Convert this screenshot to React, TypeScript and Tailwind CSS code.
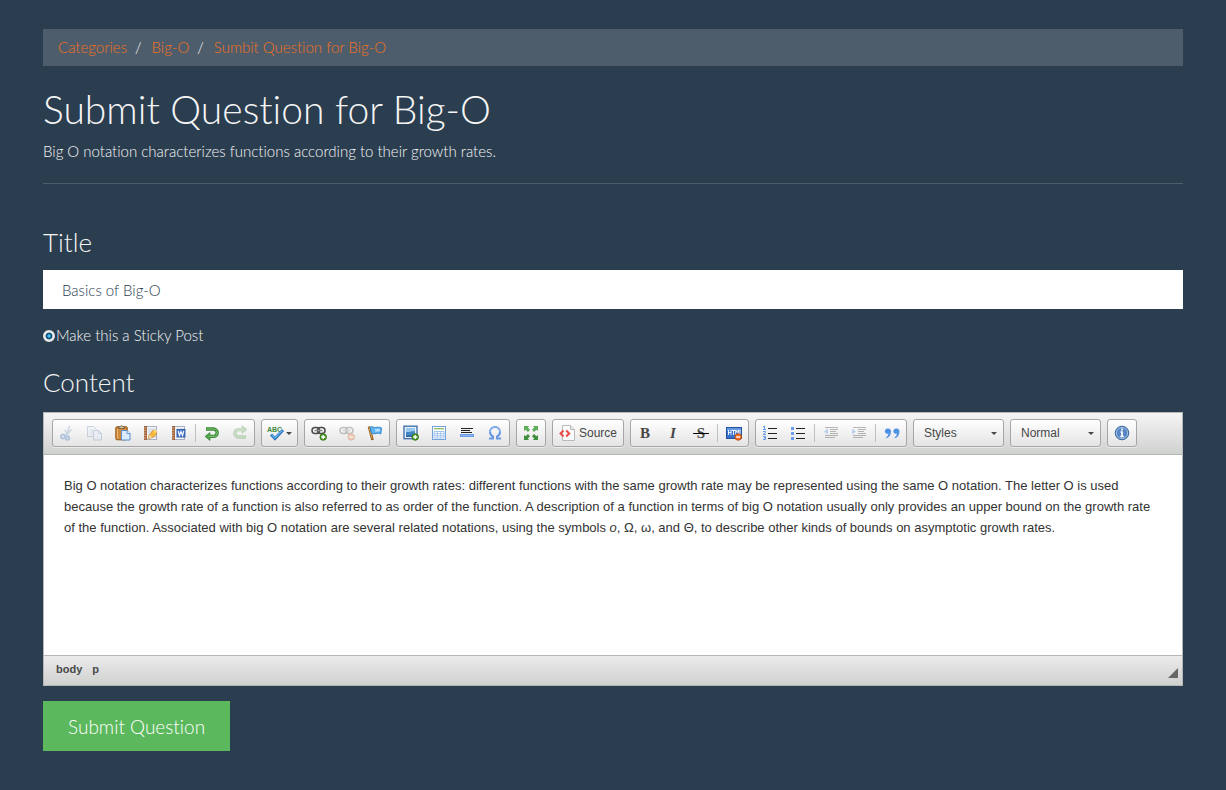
import { useState } from "react";
import type { ReactNode } from "react";

function Icon({ children, faded = false }: { children: ReactNode; faded?: boolean }) {
  return (
    <svg viewBox="0 0 16 16" aria-hidden="true" className={faded ? "size-4 opacity-30" : "size-4"} fill="none">
      {children}
    </svg>
  );
}

function PlusBadge() {
  return (
    <>
      <circle cx="12.2" cy="12" r="3.3" fill="#4c9a2a" stroke="#2f6e15" strokeWidth="0.8" />
      <path d="M10.2 12h4M12.2 10v4" stroke="#fff" strokeWidth="1.3" />
    </>
  );
}

function MinusBadge() {
  return (
    <>
      <circle cx="12.2" cy="12" r="3.3" fill="#ee6c22" stroke="#bf4a0c" strokeWidth="0.8" />
      <path d="M10.2 12h4" stroke="#fff" strokeWidth="1.4" />
    </>
  );
}

function ChainLinks() {
  return (
    <>
      <rect x="1" y="2.5" width="7.5" height="6" rx="3" stroke="#4a4a4a" strokeWidth="1.5" />
      <rect x="6.5" y="2.5" width="7.5" height="6" rx="3" stroke="#4a4a4a" strokeWidth="1.5" />
      <path d="M3.500 5.500h8" stroke="#8a8a8a" strokeWidth="1.5" />
    </>
  );
}

function Notebook() {
  return (
    <>
      <rect x="3.5" y="1.5" width="10" height="13" fill="#f2f4f8" stroke="#a9afc0" />
      <rect x="1" y="1" width="3" height="14" fill="#a5683f" />
      <path d="M1 3h2M1 5.500h2M1 8h2M1 10.500h2M1 13h2" stroke="#dcb496" strokeWidth="0.8" />
      <path d="M5 4h8M5 6h8M5 8h8M5 10h8M5 12h8" stroke="#bcc6da" strokeWidth="0.8" />
    </>
  );
}

const icons = {
  cut: (
    <Icon faded>
      <path d="M10.500 1 8 9.500M12.500 4.500 6.500 11M6 5l3 6" stroke="#7595c0" strokeWidth="1.600" />
      <circle cx="4" cy="11.500" r="2" stroke="#2f6cb8" strokeWidth="2" />
      <circle cx="8.500" cy="13" r="1.800" stroke="#2f6cb8" strokeWidth="2" />
    </Icon>
  ),
  copy: (
    <Icon faded>
      <path d="M.5 1.500h6l3 3v7h-9z" fill="#e8f0fa" stroke="#6583ad" />
      <path d="M2.500 5h4M2.500 7h4M2.500 9h4" stroke="#9db4d3" />
      <path d="M6.500 5.500h5l3 3v6.500h-8z" fill="#dce9f8" stroke="#6583ad" />
      <path d="M11.500 5.500v3h3" stroke="#6583ad" />
    </Icon>
  ),
  paste: (
    <Icon>
      <rect x=".8" y="1.800" width="11.500" height="13" rx="1.200" fill="#d08c3c" stroke="#94581c" />
      <path d="M2.500 4v9.500" stroke="#efb76a" />
      <path d="M3.500 3.500V2H5C5.500.4 7.500.4 8 2h1.500v1.500z" fill="#d9c9a8" stroke="#6b5433" strokeWidth="0.800" />
      <path d="M6.500 5.500h5.500l3 3v6.500H6.500z" fill="#dcecff" stroke="#5d8fd0" />
      <path d="M12 5.500v3h3" fill="#fff" stroke="#5d8fd0" />
    </Icon>
  ),
  pasteText: (
    <Icon>
      <Notebook />
      <path d="m5 14 1.500-4.500c2-.500 2-4 4.500-4.500l2.500 2.500c.500 2.500-2 3-3 4.500z" fill="#f6b93b" stroke="#c77b18" strokeWidth="0.700" />
      <path d="m10 6 3-1.500 1 2-2 2z" fill="#ffd977" />
      <path d="m5 14 1.500-4c1 .5 2 1.500 2.500 2.500z" fill="#f8d9a2" />
    </Icon>
  ),
  pasteWord: (
    <Icon>
      <Notebook />
      <rect x="6" y="4.500" width="8" height="7.500" fill="#4778cb" stroke="#2853a0" strokeWidth="0.800" />
      <path d="m7.200 6 1.300 4.500L10 6.500l1.500 4L12.800 6" stroke="#fff" strokeWidth="1.100" />
    </Icon>
  ),
  undo: (
    <Icon>
      <path d="M2 4h7.500a3.700 3.700 0 0 1 0 7.400H5" stroke="#3a8a35" strokeWidth="3.400" />
      <path d="M6 7.500v8L1 11.400z" fill="#4d9f46" stroke="#2f7a2c" strokeWidth="0.600" />
      <path d="M2.500 4h7a3.700 3.700 0 0 1 0 7.400H4.500" stroke="#7cc170" strokeWidth="1.200" />
    </Icon>
  ),
  redo: (
    <Icon faded>
      <path d="M14 12H6.500a3.700 3.700 0 0 1 0-7.400H11" stroke="#3a8a35" strokeWidth="3.400" />
      <path d="M10 .5v8l5-4z" fill="#4d9f46" stroke="#2f7a2c" strokeWidth="0.600" />
      <path d="M13.500 12h-7a3.700 3.700 0 0 1 0-7.400h5" stroke="#7cc170" strokeWidth="1.200" />
    </Icon>
  ),
  link: (
    <Icon>
      <ChainLinks />
      <PlusBadge />
    </Icon>
  ),
  unlink: (
    <Icon faded>
      <ChainLinks />
      <MinusBadge />
    </Icon>
  ),
  anchor: (
    <Icon>
      <path d="m2 1.500 3.500 13.500" stroke="#8a5518" strokeWidth="2.600" />
      <path d="m2 2 3.200 12" stroke="#e0a246" />
      <path d="M3 2.500c2-2 4 .500 6 0 2-.500 3.500-.500 5.500.500L13.800 9c-2-1-3-1-4.500-.500-1.500.500-3 0-4.800 0z" fill="#5db4ef" stroke="#2d80c8" strokeWidth="0.900" />
      <path d="M8 3.800c1.500.500 3-.500 5 0l-.500 3c-1.500-.500-3 0-4 0z" fill="#b4e2fd" />
    </Icon>
  ),
  image: (
    <Icon>
      <rect x="1" y="1.200" width="13" height="12.500" fill="#e8f1fb" stroke="#3a68a8" strokeWidth="1.300" />
      <path d="M3 3h9v4.500H3z" fill="#99c8ee" />
      <path d="M3 7c3 .500 6-1 9-1v5.500H3z" fill="#4286c5" />
      <path d="M3 10.500h9v1.500H3z" fill="#2c609e" />
      <PlusBadge />
    </Icon>
  ),
  table: (
    <Icon>
      <rect x="1.500" y="1.500" width="13" height="13" fill="#fff" stroke="#73a3df" />
      <path d="M3 3.700h10" stroke="#91bf68" strokeWidth="1.400" />
      <path d="M3 6.500h10v6.500H3zM3 8.700h10M3 10.800h10M6.300 6.500V13M9.700 6.500V13" stroke="#a0c4ef" />
    </Icon>
  ),
  rule: (
    <Icon>
      <path d="M2 3.500h12M2 5.500h9M2 7.500h11" stroke="#222" />
      <rect x="1.500" y="9.500" width="13" height="2" fill="#8db8f5" stroke="#6c9ce8" />
    </Icon>
  ),
  omega: (
    <Icon>
      <path d="M2 13.500h4v-1.800C4 10.500 3 8.700 3 7a5 5 0 0 1 10 0c0 1.700-1 3.500-3 4.700v1.800h4" stroke="#6797e2" strokeWidth="2" />
      <path d="M3 7a5 5 0 0 1 10 0" stroke="#93bcf2" />
    </Icon>
  ),
  maximize: (
    <Icon>
      <g fill="#5fae5c">
        <path d="M1 1h5L4.800 2.500 7 4.800 5 7 2.500 4.700 1 6z" />
        <path d="M15 1h-5l1.200 1.500L9 4.800 11 7l2.500-2.300L15 6z" />
      </g>
      <g fill="#3f8f3e">
        <path d="M1 15h5l-1.200-1.500L7 11.200 5 9l-2.500 2.300L1 10z" />
        <path d="M15 15h-5l1.200-1.500L9 11.200 11 9l2.500 2.300L15 10z" />
      </g>
    </Icon>
  ),
  source: (
    <Icon>
      <path d="M3.500.5h8l4 4v11h-12z" fill="#fafafa" stroke="#b9b9b9" />
      <path d="M11.500.5v4h4" fill="#e9e9e9" stroke="#b9b9b9" />
      <path d="M4.500 5.500 1.500 8.500l3 3M7.200 5.500l3 3-3 3" stroke="#ed4b43" strokeWidth="2" />
    </Icon>
  ),
  html: (
    <Icon>
      <rect x=".5" y="2.500" width="15" height="11" fill="#386fcb" stroke="#264f9e" />
      <path d="M1 3h14v3H1z" fill="#6699e3" />
      <path d="M2.500 5v5M5 5v5M2.500 7.500H5M6 5.500h3M7.500 5.500V10M9.700 10V5l1.500 2.500L12.700 5v5M14 5v4.500" stroke="#fff" strokeWidth="0.900" />
      <MinusBadge />
    </Icon>
  ),
  numbered: (
    <Icon>
      <path d="M1 2 2.500 1V4M1 4.500h3M1 6.500h2.500v1L1 9.500h3M1 11.500h2.500v1.300H2h1.500V14.500H1" stroke="#689bea" />
      <path d="M6 3.500h9M6 8.500h9M6 13.500h9" stroke="#222" />
    </Icon>
  ),
  bulleted: (
    <Icon>
      <path d="M1 2h3v3H1zM1 7h3v3H1zM1 12h3v3H1z" fill="#6b9eee" />
      <path d="M6 3.500h9M6 8.500h9M6 13.500h9" stroke="#222" />
    </Icon>
  ),
  outdent: (
    <Icon faded>
      <path d="M2 2.500h13M7 4.500h8M7 6.500h6M7 8.500h8M2 10.500h13M2 12.500h10" stroke="#222" />
      <path d="M5 3.500v6L1 6.500z" fill="#3c82e0" />
    </Icon>
  ),
  indent: (
    <Icon faded>
      <path d="M2 2.500h13M7 4.500h8M7 6.500h6M7 8.500h8M2 10.500h13M2 12.500h10" stroke="#222" />
      <path d="M1 3.500v6l4-3z" fill="#3c82e0" />
    </Icon>
  ),
  quote: (
    <Icon>
      <path d="M4 3.500a2.700 2.700 0 1 0 .4 5.200C4.200 10.500 3.200 11.500 2 12.500v.800C5 12.500 7 10 7 6.500c0-1.800-1.200-3-3-3z" fill="#4f93e6" />
      <path d="M12.500 3.500a2.700 2.700 0 1 0 .4 5.200c-.2 1.800-1.200 2.800-2.400 3.800v.8c3-.800 5-3.300 5-6.800 0-1.800-1.200-3-3-3z" fill="#4f93e6" />
    </Icon>
  ),
  about: (
    <Icon>
      <circle cx="8" cy="8" r="6.800" fill="#5586c2" stroke="#41699c" />
      <circle cx="8" cy="8" r="5.600" stroke="#a5c5e7" strokeWidth="0.900" />
      <path d="M8 3.500v2M6.500 7H8v4.500M6.300 11.500h3.500" stroke="#fff" strokeWidth="1.700" />
    </Icon>
  ),
};

function Group({ children }: { children: ReactNode }) {
  return (
    <div className="flex h-7 items-stretch rounded-[3px] border border-[#a6a6a6] bg-linear-to-b from-white to-[#e4e4e4] shadow-[0_1px_0_rgba(255,255,255,0.5)]">
      {children}
    </div>
  );
}

function Tool({ label, children, disabled = false }: { label: string; children: ReactNode; disabled?: boolean }) {
  return (
    <button type="button" aria-label={label} title={label} disabled={disabled} className="flex w-7 items-center justify-center">
      {children}
    </button>
  );
}

function Separator() {
  return <span className="mx-0.5 h-[18px] w-px self-center bg-[#c0c0c0]" />;
}

function Arrow() {
  return (
    <svg viewBox="0 0 6 3" aria-hidden="true" className="h-[3px] w-1.5">
      <path d="M0 0h6L3 3z" fill="#474747" />
    </svg>
  );
}

function Combo({ label, options }: { label: string; options: string[] }) {
  return (
    <Group>
      <div className="relative flex items-center">
        <select aria-label={label} className="h-full w-[89px] appearance-none bg-transparent pl-2.5 text-xs text-[#474747] outline-none">
          {options.map((option) => (
            <option key={option}>{option}</option>
          ))}
        </select>
        <span className="pointer-events-none absolute right-1.5">
          <Arrow />
        </span>
      </div>
    </Group>
  );
}

function Toolbar() {
  return (
    <div role="toolbar" aria-label="Editor" className="flex flex-wrap gap-1.5 border-b border-[#b6b6b6] bg-linear-to-b from-[#f5f5f5] to-[#cfd1cf] px-2 pt-1.5 pb-[7px] text-[#474747]">
      <Group>
        <Tool label="Cut" disabled>{icons.cut}</Tool>
        <Tool label="Copy" disabled>{icons.copy}</Tool>
        <Tool label="Paste">{icons.paste}</Tool>
        <Tool label="Paste as plain text">{icons.pasteText}</Tool>
        <Tool label="Paste from Word">{icons.pasteWord}</Tool>
        <Separator />
        <Tool label="Undo">{icons.undo}</Tool>
        <Tool label="Redo" disabled>{icons.redo}</Tool>
      </Group>
      <Group>
        <button type="button" aria-label="Spell Check As You Type" className="flex w-[35px] items-center justify-center gap-px">
          <svg viewBox="0 0 18 16" aria-hidden="true" className="h-4 w-[18px]">
            <text x="0" y="7" fontSize="7" fontWeight="700" fill="#3c8a3c" fontFamily="Liberation Sans, sans-serif">ABC</text>
            <path d="m4 9.500 4 4 8-8.500" fill="none" stroke="#2f72b8" strokeWidth="3" />
            <path d="m4.500 9.500 3.500 3.500 7.500-8" fill="none" stroke="#5db1ef" strokeWidth="1.400" />
          </svg>
          <Arrow />
        </button>
      </Group>
      <Group>
        <Tool label="Link">{icons.link}</Tool>
        <Tool label="Unlink" disabled>{icons.unlink}</Tool>
        <Tool label="Anchor">{icons.anchor}</Tool>
      </Group>
      <Group>
        <Tool label="Image">{icons.image}</Tool>
        <Tool label="Table">{icons.table}</Tool>
        <Tool label="Insert Horizontal Line">{icons.rule}</Tool>
        <Tool label="Insert Special Character">{icons.omega}</Tool>
      </Group>
      <Group>
        <Tool label="Maximize">{icons.maximize}</Tool>
      </Group>
      <Group>
        <button type="button" className="flex items-center gap-1 px-1.5 text-xs">
          {icons.source}
          Source
        </button>
      </Group>
      <Group>
        <Tool label="Bold">
          <span className="font-['Liberation_Serif',serif] text-[15px] leading-4 font-bold">B</span>
        </Tool>
        <Tool label="Italic">
          <span className="font-['Liberation_Serif',serif] text-[15px] leading-4 font-bold italic">I</span>
        </Tool>
        <Tool label="Strikethrough">
          <span className="font-['Liberation_Serif',serif] text-[15px] leading-4 font-bold line-through decoration-black">
            &nbsp;S&nbsp;
          </span>
        </Tool>
        <Separator />
        <Tool label="Remove Format">{icons.html}</Tool>
      </Group>
      <Group>
        <Tool label="Numbered list">{icons.numbered}</Tool>
        <Tool label="Bulleted list">{icons.bulleted}</Tool>
        <Separator />
        <Tool label="Decrease Indent" disabled>{icons.outdent}</Tool>
        <Tool label="Increase Indent" disabled>{icons.indent}</Tool>
        <Separator />
        <Tool label="Block Quote">{icons.quote}</Tool>
      </Group>
      <Combo label="Formatting Styles" options={["Styles"]} />
      <Combo label="Paragraph Format" options={["Normal", "Heading 1", "Heading 2"]} />
      <Group>
        <Tool label="About">{icons.about}</Tool>
      </Group>
    </div>
  );
}

function Editor() {
  return (
    <div className="border border-[#b6b6b6] bg-white font-['Liberation_Sans',sans-serif] font-normal">
      <Toolbar />
      <div
        role="textbox"
        aria-multiline="true"
        aria-labelledby="content-heading"
        contentEditable
        suppressContentEditableWarning
        className="min-h-[200px] p-5 text-[13px] leading-[21px] text-[#333] outline-none"
      >
        <p>
          Big O notation characterizes functions according to their growth rates: different functions with the same
          growth rate may be represented using the same O notation. The letter O is used because the growth rate of a
          function is also referred to as order of the function. A description of a function in terms of big O notation
          usually only provides an upper bound on the growth rate of the function. Associated with big O notation are
          several related notations, using the symbols <i>o</i>, Ω, ω, and Θ, to describe other kinds of bounds on
          asymptotic growth rates.
        </p>
      </div>
      <div className="flex h-[30px] items-center justify-between border-t border-[#b6b6b6] bg-linear-to-b from-[#ebebeb] to-[#cfd1cf] pr-1 pl-3 text-[11px] font-bold text-[#484848]">
        <div className="flex gap-2.5 pb-0.5">
          <span>body</span>
          <span>p</span>
        </div>
        <svg viewBox="0 0 10 10" aria-hidden="true" className="mb-[7px] size-2.5 self-end">
          <path d="M10 0v10H0z" fill="#666" />
        </svg>
      </div>
    </div>
  );
}

export default function App() {
  const [title, setTitle] = useState("Basics of Big-O");
  return (
    <div className="min-h-screen bg-[#2b3e50] font-['Lato',sans-serif] text-[15px] leading-[21px] font-light text-[#f5f5f5] [font-variant-ligatures:none]">
      <main className="mx-auto max-w-[1170px] px-[15px] py-[29px]">
        <nav aria-label="Breadcrumb" className="bg-[#4e5d6c] px-[15px] py-2">
          <ol className="flex text-[#f0701c]">
            <li><a href="#categories">Categories</a></li>
            <li className="flex before:pr-2.5 before:pl-2 before:text-[#f5f5f5] before:content-['/']"><a href="#big-o">Big-O</a></li>
            <li className="flex before:pr-2.5 before:pl-2 before:text-[#f5f5f5] before:content-['/']"><a href="#submit">Sumbit Question for Big-O</a></li>
          </ol>
        </nav>
        <header className="mt-[22px] border-b border-[#4e5d6c] pb-[21px]">
          <h1 className="text-[39px] leading-[43px]">Submit Question for Big-O</h1>
          <p className="mt-2.5">Big O notation characterizes functions according to their growth rates.</p>
        </header>
        <form className="mt-11" onSubmit={(event) => event.preventDefault()}>
          <h3 className="text-[26px] leading-7">
            <label htmlFor="title">Title</label>
          </h3>
          <input
            id="title"
            type="text"
            value={title}
            onChange={(event) => setTitle(event.target.value)}
            className="mt-3.5 h-[39px] w-full bg-white px-[19px] text-[#2b3e50] outline-none"
          />
          <div className="mt-4 flex items-center">
            <input
              id="sticky"
              type="radio"
              defaultChecked
              className="size-3 appearance-none rounded-full border-2 border-[#e8e8e8] bg-white checked:bg-[radial-gradient(circle,#4cc3f5_0_1px,#14597f_2px_3px,#fff_4px)]"
            />
            <label htmlFor="sticky" className="pl-px">Make this a Sticky Post</label>
          </div>
          <h3 id="content-heading" className="mt-[22px] mb-4 text-[26px] leading-7">Content</h3>
          <Editor />
          <button type="submit" className="mt-[15px] h-[50px] bg-[#5cb85c] px-[25px] text-[19px] text-white">
            Submit Question
          </button>
        </form>
      </main>
    </div>
  );
}
